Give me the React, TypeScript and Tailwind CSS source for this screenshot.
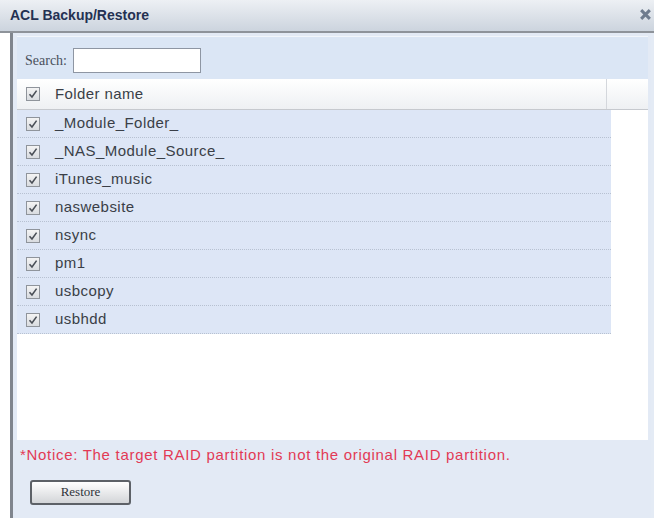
import React from "react";

const folders = [
  "_Module_Folder_",
  "_NAS_Module_Source_",
  "iTunes_music",
  "naswebsite",
  "nsync",
  "pm1",
  "usbcopy",
  "usbhdd",
];

function Check() {
  return (
    <span className="flex h-[14px] w-[14px] items-center justify-center border border-[#8f949b] bg-gradient-to-b from-[#f4f4f4] to-[#d9dce0]">
      <svg width="10" height="10" viewBox="0 0 10 10">
        <path d="M1.5 5.2 L4 8 L8.6 1.6" fill="none" stroke="#4a4f57" strokeWidth="1.6" />
      </svg>
    </span>
  );
}

export default function App() {
  return (
    <div
      className="flex h-[523px] w-[654px] flex-col bg-white text-[#2b2f36]"
      style={{ fontFamily: '"Liberation Sans", Arial, sans-serif' }}
    >
      <div className="flex h-[33px] shrink-0 items-center justify-between border-b-2 border-[#8e939a] bg-gradient-to-b from-[#edf0f4] to-[#ccd4de] pl-[10px] pr-[2px]">
        <span className="text-[14px] font-bold text-[#243152]">ACL Backup/Restore</span>
        <svg width="13" height="13" viewBox="0 0 12 12" className="mb-[2px]">
          <path d="M2 2 L10 10 M10 2 L2 10" stroke="#6f7c8e" strokeWidth="2.8" />
        </svg>
      </div>
      <div className="flex min-h-0 flex-1 pb-[5px]">
        <div className="ml-[10px] flex flex-1 flex-col border-l-[3px] border-[#80858d] border-r-[3px] border-r-[#e4ebf5] bg-[#e3eaf5] pl-[4px] pr-[3px] pt-[3px]">
          <div className="flex h-[43px] shrink-0 items-start border-t border-[#f2f6fb] bg-[#dbe6f5] pl-[8px] pt-[11px]">
            <span
              className="mr-[6px] mt-[5px] text-[14px] leading-[16px] text-[#4a505c]"
              style={{ fontFamily: '"Liberation Serif", "Times New Roman", serif' }}
            >
              Search:
            </span>
            <div className="h-[25px] w-[128px] border border-[#8e96a3] bg-white" />
          </div>
          <div className="flex h-[361px] shrink-0 flex-col bg-white">
            <div className="flex h-[31px] shrink-0 border-b border-[#c6c9ce] bg-gradient-to-b from-[#ffffff] to-[#eef0f3]">
              <div className="flex w-[590px] items-center border-r border-[#d4d7dc] pl-[9px]">
                <Check />
                <span className="ml-[15px] text-[15px] tracking-[0.4px] text-[#3a3f47]">Folder name</span>
              </div>
              <div className="flex-1" />
            </div>
            {folders.map((f) => (
              <div
                key={f}
                className="flex h-[28px] w-[594px] shrink-0 items-center border-b border-dotted border-[#b7c1d1] bg-[#dde6f6] pl-[9px]"
              >
                <Check />
                <span className="ml-[15px] text-[15px] tracking-[0.45px] text-[#3a3f47]">{f}</span>
              </div>
            ))}
          </div>
          <div className="flex flex-1 flex-col pl-[3px] pt-[4px]">
            <span className="text-[15px] tracking-[0.7px] text-[#e23a55]">
              *Notice: The target RAID partition is not the original RAID partition.
            </span>
            <button
              className="ml-[10px] mt-[13px] flex h-[25px] w-[101px] items-center justify-center rounded-[3px] border-2 border-[#5d6167] bg-gradient-to-b from-[#ffffff] to-[#d3d5d8] text-[13px] text-[#2f333a]"
              style={{ fontFamily: '"Liberation Serif", "Times New Roman", serif' }}
            >
              Restore
            </button>
          </div>
        </div>
      </div>
    </div>
  );
}
